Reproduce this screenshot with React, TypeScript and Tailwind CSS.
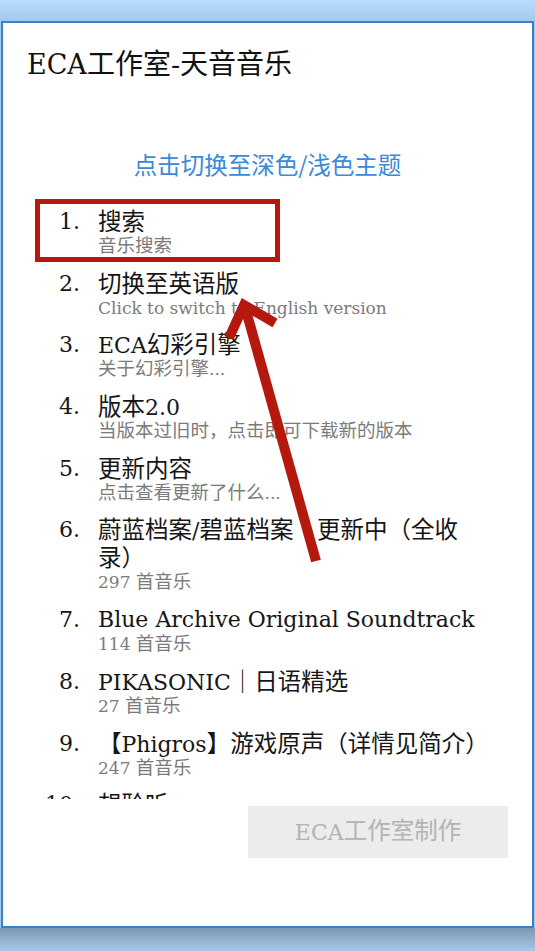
const serif = "font-['DejaVu_Serif','Noto_Sans_CJK_SC',serif]";

// Han characters and full-width punctuation render a touch larger than the serif Latin text
const CJK_RUN = /([\u2E80-\u9FFF\u3000-\u303F\uFF00-\uFFEF]+)/;

function Mixed({ text, cjk }: { text: string; cjk: string }) {
  return (
    <>
      {text.split(CJK_RUN).map((part, i) =>
        i % 2 ? (
          <span key={i} className={cjk}>
            {part}
          </span>
        ) : (
          part
        ),
      )}
    </>
  );
}

type Entry = { lines: string[]; sub: string };

const entries: Entry[] = [
  { lines: ['搜索'], sub: '音乐搜索' },
  { lines: ['切换至英语版'], sub: 'Click to switch to English version' },
  { lines: ['ECA幻彩引擎'], sub: '关于幻彩引擎...' },
  { lines: ['版本2.0'], sub: '当版本过旧时，点击即可下载新的版本' },
  { lines: ['更新内容'], sub: '点击查看更新了什么...' },
  { lines: ['蔚蓝档案/碧蓝档案　更新中（全收', '录）'], sub: '297 首音乐' },
  { lines: ['Blue Archive Original Soundtrack'], sub: '114 首音乐' },
  { lines: ['PIKASONIC｜日语精选'], sub: '27 首音乐' },
  { lines: ['【Phigros】游戏原声（详情见简介）'], sub: '247 首音乐' },
  { lines: ['想聆听'], sub: '' },
];

function MenuItem({ index, entry }: { index: number; entry: Entry }) {
  return (
    <li className="flex shrink-0">
      <span className="h-[28px] w-[46px] shrink-0 text-right text-[22px] leading-[28px] text-[#161616]">
        {index}.
      </span>
      <div className="ml-[18px] w-[382px]">
        {entry.lines.map((line, i) => (
          <div key={i} className="h-[28px] whitespace-nowrap text-[22px] leading-[28px] text-[#161616]">
            <Mixed text={line} cjk="text-[23.5px]" />
          </div>
        ))}
        {entry.sub && (
          <div className="h-[20px] whitespace-nowrap text-[17px] leading-[20px] text-[#7b7b7b]">
            <Mixed text={entry.sub} cjk="text-[18.5px]" />
          </div>
        )}
      </div>
    </li>
  );
}

export default function App() {
  return (
    <div className={`relative flex h-[951px] w-[535px] flex-col overflow-hidden bg-[#a9c9ea] ${serif}`}>
      <div className="h-[21px] shrink-0 bg-gradient-to-b from-[#b8dcfa] to-[#a5c9ed]" />

      <div className="ml-[1px] flex h-[907px] w-[533px] shrink-0 flex-col border-2 border-[#3a7fce] bg-white">
        <h1 className="h-[60px] pl-[24px] pt-[24px] text-[27px] font-normal leading-[36px] text-[#111]">
          <Mixed text="ECA工作室-天音音乐" cjk="text-[28px]" />
        </h1>

        <button className="mt-[66px] h-[30px] text-center font-['Noto_Sans_CJK_SC',sans-serif] text-[23.5px] leading-[30px] text-[#3b89d8]">
          点击切换至深色/浅色主题
        </button>

        <ol className="mt-[29px] flex h-[591px] shrink-0 flex-col gap-[13.7px] overflow-hidden pl-[31px]">
          {entries.map((e, i) => (
            <MenuItem key={i} index={i + 1} entry={e} />
          ))}
        </ol>

        <div className="mt-[7px] flex justify-end pr-[24px]">
          <button className="flex h-[52px] w-[260px] items-center justify-center bg-[#ececec] text-[22px] text-[#b3b3b3]">
            <Mixed text="ECA工作室制作" cjk="text-[23.5px]" />
          </button>
        </div>
      </div>

      <div className="flex-1 bg-gradient-to-b from-[#7d97af] to-[#a8c8e9]" />

      {/* red callout drawn on top of the dialog */}
      <svg
        className="pointer-events-none absolute left-0 top-0"
        width="535"
        height="951"
        viewBox="0 0 535 951"
      >
        <rect x="37.5" y="201.5" width="240" height="58" fill="none" stroke="#b5190e" strokeWidth="5" />
        <polyline
          points="229,338 244,305 275,323"
          fill="none"
          stroke="#b5190e"
          strokeWidth="10"
          strokeLinejoin="miter"
        />
        <line x1="245" y1="307" x2="316" y2="561" stroke="#b5190e" strokeWidth="10" />
      </svg>
    </div>
  );
}
